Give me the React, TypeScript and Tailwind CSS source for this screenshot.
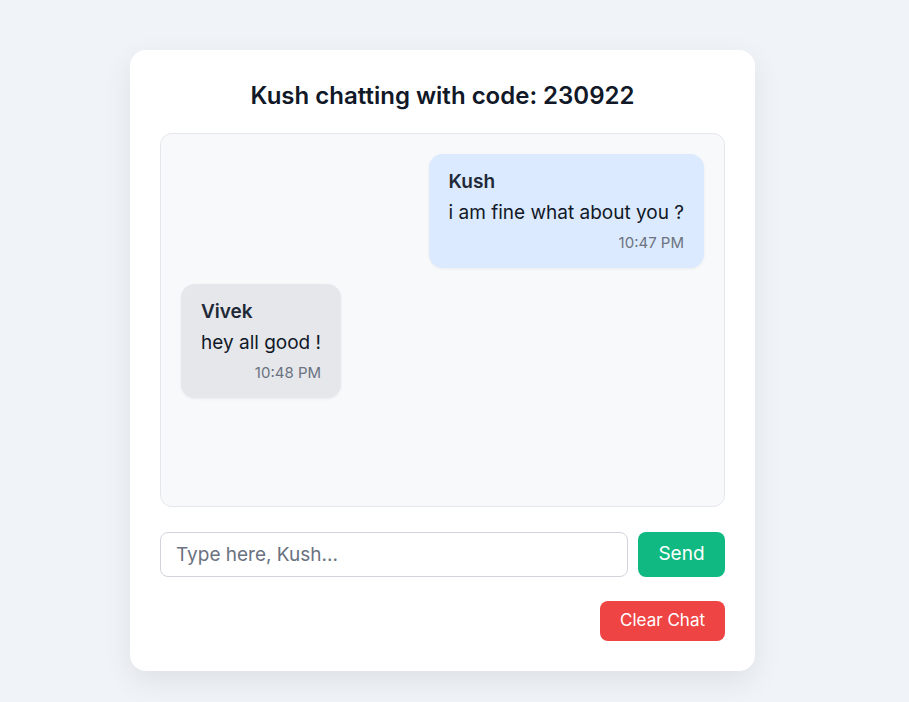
import React from 'react'

interface Message {
  sender: string
  text: string
  time: string
  mine: boolean
}

const messages: Message[] = [
  { sender: 'Kush', text: 'i am fine what about you ?', time: '10:47 PM', mine: true },
  { sender: 'Vivek', text: 'hey all good !', time: '10:48 PM', mine: false },
]

function Bubble({ msg }: { msg: Message }) {
  return (
    <div className={msg.mine ? 'flex justify-end' : 'flex justify-start'}>
      <div
        className={
          'rounded-[14px] px-5 pt-4 pb-[15px] shadow-[0_1px_3px_rgba(0,0,0,0.06)] ' +
          (msg.mine ? 'bg-[#dbeafe]' : 'bg-[#e5e7eb]')
        }
      >
        <div className="text-[19px] leading-6 font-semibold text-[#1f2937]">{msg.sender}</div>
        <div className="mt-[5px] text-[19px] leading-7 text-[#111827]">{msg.text}</div>
        <div className="mt-[6px] text-right text-[15px] leading-5 text-[#6b7280]">{msg.time}</div>
      </div>
    </div>
  )
}

export default function App() {
  return (
    <div
      className="min-h-screen bg-[#f0f4f8] flex justify-center pt-[50px] pr-6"
      style={{ fontFamily: 'Inter, "Noto Sans", sans-serif' }}
    >
      <div className="w-[625px] h-[621px] bg-white rounded-[16px] p-[30px] shadow-[0_10px_30px_rgba(0,0,0,0.08)]">
        <h1 className="text-center text-[24px] leading-8 font-semibold text-[#111827]">
          Kush chatting with code: 230922
        </h1>

        <div className="mt-[21px] h-[374px] rounded-[12px] border border-[#e5e7eb] bg-[#f8f9fb] p-5 flex flex-col gap-4">
          {messages.map((msg, idx) => (
            <Bubble key={idx} msg={msg} />
          ))}
        </div>

        <div className="mt-[25px] flex gap-[10px]">
          <input
            type="text"
            placeholder="Type here, Kush..."
            className="flex-1 h-[45px] rounded-lg border border-[#d1d5db] px-[15px] text-[19px] text-[#111827] placeholder:text-[#6b7280] outline-none"
          />
          <button className="w-[87px] h-[45px] rounded-lg bg-[#10b981] text-white text-[19px]">
            Send
          </button>
        </div>

        <div className="mt-6 flex justify-end">
          <button className="h-[40px] px-5 rounded-lg bg-[#ef4444] text-white text-[17px]">
            Clear Chat
          </button>
        </div>
      </div>
    </div>
  )
}
